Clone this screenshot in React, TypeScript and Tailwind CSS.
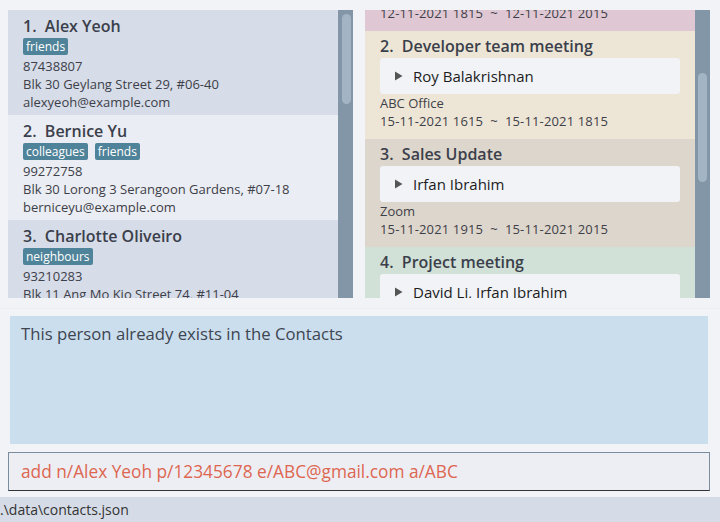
import React from "react";

type Person = { idx: number; name: string; tags: string[]; phone: string; address: string; email: string };

const people: Person[] = [
  { idx: 1, name: "Alex Yeoh", tags: ["friends"], phone: "87438807", address: "Blk 30 Geylang Street 29, #06-40", email: "alexyeoh@example.com" },
  { idx: 2, name: "Bernice Yu", tags: ["colleagues", "friends"], phone: "99272758", address: "Blk 30 Lorong 3 Serangoon Gardens, #07-18", email: "berniceyu@example.com" },
  { idx: 3, name: "Charlotte Oliveiro", tags: ["neighbours"], phone: "93210283", address: "Blk 11 Ang Mo Kio Street 74, #11-04", email: "charlotte@example.com" },
];

type Ev = { idx: number; title: string; people: string; place: string; time: string; bg: string };

const events: Ev[] = [
  { idx: 2, title: "Developer team meeting", people: "Roy Balakrishnan", place: "ABC Office", time: "15-11-2021 1615  ~  15-11-2021 1815", bg: "bg-[#ede6d6]" },
  { idx: 3, title: "Sales Update", people: "Irfan Ibrahim", place: "Zoom", time: "15-11-2021 1915  ~  15-11-2021 2015", bg: "bg-[#ddd6cc]" },
  { idx: 4, title: "Project meeting", people: "David Li, Irfan Ibrahim", place: "Online", time: "16-11-2021 1000  ~  16-11-2021 1100", bg: "bg-[#d1e1d7]" },
];

function PersonCard({ p }: { p: Person }) {
  const bg = p.idx % 2 === 1 ? "bg-[#d6dce8]" : "bg-[#eaedf3]";
  return (
    <div className={`${bg} shrink-0 h-[105px] px-[15px] pt-[5px] flex flex-col`}>
      <div className="text-[16px] leading-[22px] font-semibold text-[#3b3f4b] whitespace-pre">{`${p.idx}.  ${p.name}`}</div>
      <div className="flex gap-[7px] mt-[1px]">
        {p.tags.map((t) => (
          <span key={t} className="bg-[#4f8399] text-white text-[12px] leading-[17px] px-[3px] rounded-[2px]">{t}</span>
        ))}
      </div>
      <div className="mt-[2px] text-[13px] leading-[18px] text-[#3d4048]">{p.phone}</div>
      <div className="text-[13px] leading-[18px] text-[#3d4048]">{p.address}</div>
      <div className="text-[13px] leading-[18px] text-[#3d4048]">{p.email}</div>
    </div>
  );
}

function Triangle() {
  return (
    <svg width="8" height="10" viewBox="0 0 8 10" className="shrink-0">
      <polygon points="0,0.5 7.5,5 0,9.5" fill="#555555" />
    </svg>
  );
}

function EventCard({ e }: { e: Ev }) {
  return (
    <div className={`${e.bg} shrink-0 h-[108px] px-[15px] pt-[4px] flex flex-col`}>
      <div className="text-[16px] leading-[22px] font-semibold text-[#3b3f4b] whitespace-pre">{`${e.idx}.  ${e.title}`}</div>
      <div className="mt-[1px] h-[36px] bg-[#f1f3f7] rounded-[3px] flex items-center pl-[15px] gap-[10px]">
        <Triangle />
        <span className="text-[15px] text-[#1c1c1c]">{e.people}</span>
      </div>
      <div className="text-[13px] leading-[18px] text-[#3d4048]">{e.place}</div>
      <div className="text-[13px] leading-[18px] tracking-[0.15px] text-[#3d4048] whitespace-pre">{e.time}</div>
    </div>
  );
}

export default function App() {
  return (
    <div className="w-[720px] h-[522px] bg-[#f1f3f7] flex flex-col font-['Open_Sans',sans-serif] overflow-hidden">
      <div className="flex h-[298px] shrink-0 pt-[10px] pl-[8px] pr-[10px] gap-[12px]">
        {/* Left panel: persons */}
        <div className="flex w-[345px] h-[288px]">
          <div className="w-[330px] h-full overflow-hidden flex flex-col">
            {people.map((p) => (
              <PersonCard key={p.idx} p={p} />
            ))}
          </div>
          <div className="w-[15px] h-full bg-[#8396a8] pl-[4px] pt-[4px]">
            <div className="w-[9px] h-[90px] rounded-[5px] bg-[#a3b5c4]" />
          </div>
        </div>
        {/* Right panel: events */}
        <div className="flex w-[345px] h-[288px]">
          <div className="w-[330px] h-full overflow-hidden flex flex-col">
            <div className="bg-[#dfc8d3] shrink-0 h-[21px] px-[15px] overflow-hidden">
              <div className="mt-[-6px] text-[13px] leading-[18px] tracking-[0.15px] text-[#3d4048] whitespace-pre">12-11-2021 1815  ~  12-11-2021 2015</div>
            </div>
            {events.map((e) => (
              <EventCard key={e.idx} e={e} />
            ))}
          </div>
          <div className="w-[15px] h-full bg-[#8396a8] pl-[3px] pt-[63px]">
            <div className="w-[9px] h-[109px] rounded-[5px] bg-[#a3b5c4]" />
          </div>
        </div>
      </div>

      <div className="mt-[10px] border-t border-[#eceef2] pt-[7px] shrink-0">
        <div className="ml-[10px] mr-[12px] h-[128px] bg-[#cbdeee] px-[11px] pt-[6px]">
          <div className="text-[16.7px] leading-[24px] text-[#3e4551]">This person already exists in the Contacts</div>
        </div>
      </div>

      <div className="mt-[8px] ml-[8px] mr-[10px] h-[39px] shrink-0 bg-[#edeef3] border border-[#7b8c9c] border-b-[#333333] flex items-center px-[12px]">
        <span className="text-[17.3px] text-[#dd6651]">add n/Alex Yeoh p/12345678 e/ABC@gmail.com a/ABC</span>
      </div>

      <div className="mt-[6px] flex-1 bg-[#d6dce7] flex items-center">
        <span className="text-[14px] text-[#333333]">.\data\contacts.json</span>
      </div>
    </div>
  );
}
